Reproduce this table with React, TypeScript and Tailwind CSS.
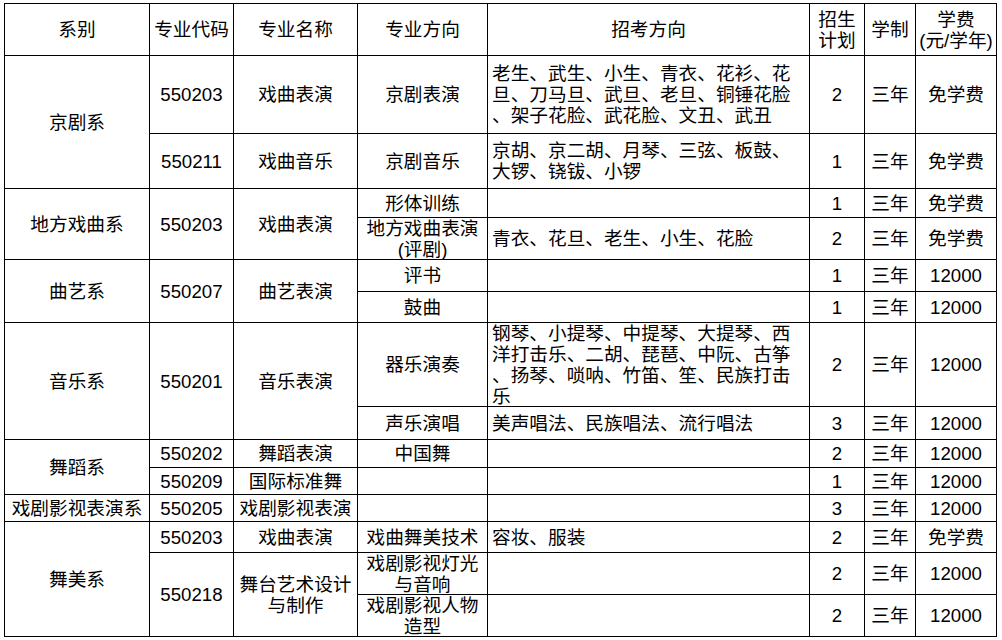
import React from "react";

function C({ className = "", children }: { className?: string; children?: React.ReactNode }) {
  return (
    <div className={"bg-white flex items-center justify-center text-center " + className}>
      <div>{children}</div>
    </div>
  );
}

function L({ className = "", children }: { className?: string; children?: React.ReactNode }) {
  return (
    <div className={"bg-white flex items-center justify-start text-left pl-[4px] whitespace-nowrap " + className}>
      <div>{children}</div>
    </div>
  );
}

export default function App() {
  return (
    <div className="w-[1002px] h-[640px] bg-white pl-[4px] pt-[3px] font-['Liberation_Sans','Noto_Sans_CJK_SC',sans-serif] text-[18.67px] leading-[21px] text-black">
      <div className="w-fit bg-black p-px grid gap-px grid-cols-[144px_83px_123px_129px_321px_54px_50px_80px] grid-rows-[51px_77px_54px_28px_41px_31px_30px_83px_32px_27px_26px_26px_30px_41px_41px]">
        {/* header */}
        <C>系别</C>
        <C>专业代码</C>
        <C>专业名称</C>
        <C>专业方向</C>
        <C>招考方向</C>
        <C>招生<br />计划</C>
        <C>学制</C>
        <C>学费<br />(元/学年)</C>

        {/* 京剧系 */}
        <C className="row-span-2">京剧系</C>
        <C>550203</C>
        <C>戏曲表演</C>
        <C>京剧表演</C>
        <L>
          老生、武生、小生、青衣、花衫、花<br />
          旦、刀马旦、武旦、老旦、铜锤花脸<br />
          、架子花脸、武花脸、文丑、武丑
        </L>
        <C>2</C>
        <C>三年</C>
        <C>免学费</C>

        <C>550211</C>
        <C>戏曲音乐</C>
        <C>京剧音乐</C>
        <L>
          京胡、京二胡、月琴、三弦、板鼓、<br />
          大锣、铙钹、小锣
        </L>
        <C>1</C>
        <C>三年</C>
        <C>免学费</C>

        {/* 地方戏曲系 */}
        <C className="row-span-2">地方戏曲系</C>
        <C className="row-span-2">550203</C>
        <C className="row-span-2">戏曲表演</C>
        <C>形体训练</C>
        <L></L>
        <C>1</C>
        <C>三年</C>
        <C>免学费</C>

        <C>地方戏曲表演<br />(评剧)</C>
        <L>青衣、花旦、老生、小生、花脸</L>
        <C>2</C>
        <C>三年</C>
        <C>免学费</C>

        {/* 曲艺系 */}
        <C className="row-span-2">曲艺系</C>
        <C className="row-span-2">550207</C>
        <C className="row-span-2">曲艺表演</C>
        <C>评书</C>
        <L></L>
        <C>1</C>
        <C>三年</C>
        <C>12000</C>

        <C>鼓曲</C>
        <L></L>
        <C>1</C>
        <C>三年</C>
        <C>12000</C>

        {/* 音乐系 */}
        <C className="row-span-2">音乐系</C>
        <C className="row-span-2">550201</C>
        <C className="row-span-2">音乐表演</C>
        <C>器乐演奏</C>
        <L>
          钢琴、小提琴、中提琴、大提琴、西<br />
          洋打击乐、二胡、琵琶、中阮、古筝<br />
          、扬琴、唢呐、竹笛、笙、民族打击<br />
          乐
        </L>
        <C>2</C>
        <C>三年</C>
        <C>12000</C>

        <C>声乐演唱</C>
        <L>美声唱法、民族唱法、流行唱法</L>
        <C>3</C>
        <C>三年</C>
        <C>12000</C>

        {/* 舞蹈系 */}
        <C className="row-span-2">舞蹈系</C>
        <C>550202</C>
        <C>舞蹈表演</C>
        <C>中国舞</C>
        <L></L>
        <C>2</C>
        <C>三年</C>
        <C>12000</C>

        <C>550209</C>
        <C>国际标准舞</C>
        <C></C>
        <L></L>
        <C>1</C>
        <C>三年</C>
        <C>12000</C>

        {/* 戏剧影视表演系 */}
        <C>戏剧影视表演系</C>
        <C>550205</C>
        <C>戏剧影视表演</C>
        <C></C>
        <L></L>
        <C>3</C>
        <C>三年</C>
        <C>12000</C>

        {/* 舞美系 */}
        <C className="row-span-3">舞美系</C>
        <C>550203</C>
        <C>戏曲表演</C>
        <C>戏曲舞美技术</C>
        <L>容妆、服装</L>
        <C>2</C>
        <C>三年</C>
        <C>免学费</C>

        <C className="row-span-2">550218</C>
        <C className="row-span-2">舞台艺术设计<br />与制作</C>
        <C>戏剧影视灯光<br />与音响</C>
        <L></L>
        <C>2</C>
        <C>三年</C>
        <C>12000</C>

        <C>戏剧影视人物<br />造型</C>
        <L></L>
        <C>2</C>
        <C>三年</C>
        <C>12000</C>
      </div>
    </div>
  );
}
